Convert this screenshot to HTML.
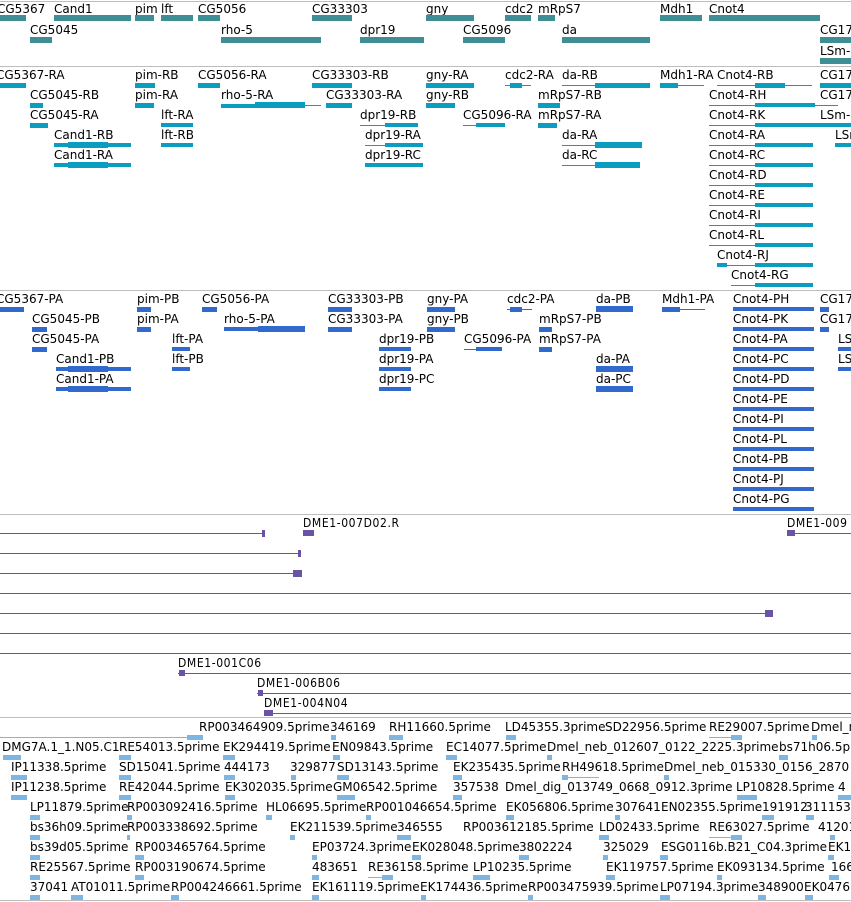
<!DOCTYPE html>
<html><head><meta charset="utf-8"><style>
body{margin:0;width:851px;height:902px;overflow:hidden;background:#fff;position:relative}
.l{position:absolute;font:12px/14px "DejaVu Sans",sans-serif;white-space:nowrap;color:#000}
.n{position:absolute;font:12px/14px "DejaVu Sans Condensed","DejaVu Sans",sans-serif;letter-spacing:0.6px;white-space:nowrap;color:#000}
.b{position:absolute}
.s{position:absolute;left:0;width:851px;height:1px;background:#bdbdbd}
.g1{background:#3f8e95;height:6px}
.g2{background:#0a9dbf;height:5px}
.g3{background:#3169cc;height:5px}
.ln2{background:#0a9dbf;height:1px}
.ln3{background:#3169cc;height:1px}
.p{background:#6a52a6}
.e{background:#7db6e2;height:5px}
</style></head><body>
<div class="s" style="top:1px"></div>
<div class="s" style="top:66px"></div>
<div class="s" style="top:290px"></div>
<div class="s" style="top:514px"></div>
<div class="s" style="top:717px"></div>
<div class="s" style="top:900px"></div>

<!-- Track 1 genes -->
<div class="l" style="left:-3px;top:2px">CG5367</div><div class="b g1" style="left:0;top:15px;width:26px"></div>
<div class="l" style="left:54px;top:2px">Cand1</div><div class="b g1" style="left:54px;top:15px;width:77px"></div>
<div class="l" style="left:135px;top:2px">pim</div><div class="b g1" style="left:135px;top:15px;width:19px"></div>
<div class="l" style="left:161px;top:2px">lft</div><div class="b g1" style="left:161px;top:15px;width:32px"></div>
<div class="l" style="left:198px;top:2px">CG5056</div><div class="b g1" style="left:198px;top:15px;width:22px"></div>
<div class="l" style="left:312px;top:2px">CG33303</div><div class="b g1" style="left:312px;top:15px;width:40px"></div>
<div class="l" style="left:426px;top:2px">gny</div><div class="b g1" style="left:426px;top:15px;width:48px"></div>
<div class="l" style="left:505px;top:2px">cdc2</div><div class="b g1" style="left:505px;top:15px;width:26px"></div>
<div class="l" style="left:538px;top:2px">mRpS7</div><div class="b g1" style="left:538px;top:15px;width:17px"></div>
<div class="l" style="left:660px;top:2px">Mdh1</div><div class="b g1" style="left:660px;top:15px;width:42px"></div>
<div class="l" style="left:709px;top:2px">Cnot4</div><div class="b g1" style="left:709px;top:15px;width:111px"></div>
<div class="l" style="left:30px;top:23px">CG5045</div><div class="b g1" style="left:30px;top:37px;width:22px"></div>
<div class="l" style="left:221px;top:23px">rho-5</div><div class="b g1" style="left:221px;top:37px;width:100px"></div>
<div class="l" style="left:360px;top:23px">dpr19</div><div class="b g1" style="left:360px;top:37px;width:64px"></div>
<div class="l" style="left:463px;top:23px">CG5096</div><div class="b g1" style="left:463px;top:37px;width:42px"></div>
<div class="l" style="left:562px;top:23px">da</div><div class="b g1" style="left:562px;top:37px;width:88px"></div>
<div class="l" style="left:820px;top:23px">CG17</div><div class="b g1" style="left:820px;top:37px;width:31px"></div>
<div class="l" style="left:820px;top:44px">LSm-</div><div class="b g1" style="left:820px;top:58px;width:31px"></div>

<!-- Track 2 transcripts -->
<div class="l" style="left:-4px;top:68px">CG5367-RA</div><div class="b g2" style="left:0;top:83px;width:26px"></div>
<div class="l" style="left:135px;top:68px">pim-RB</div><div class="b g2" style="left:135px;top:83px;width:20px"></div>
<div class="l" style="left:198px;top:68px">CG5056-RA</div><div class="b g2" style="left:198px;top:83px;width:22px"></div>
<div class="l" style="left:312px;top:68px">CG33303-RB</div><div class="b g2" style="left:312px;top:83px;width:40px"></div>
<div class="l" style="left:426px;top:68px">gny-RA</div><div class="b g2" style="left:426px;top:83px;width:48px"></div>
<div class="l" style="left:505px;top:68px">cdc2-RA</div><div class="b ln2" style="left:505px;top:85px;width:26px"></div><div class="b g2" style="left:510px;top:83px;width:12px"></div>
<div class="l" style="left:562px;top:68px">da-RB</div><div class="b ln2" style="left:562px;top:85px;width:33px"></div><div class="b g2" style="left:595px;top:83px;width:55px"></div>
<div class="l" style="left:660px;top:68px">Mdh1-RA</div><div class="b g2" style="left:660px;top:83px;width:18px"></div><div class="b ln2" style="left:678px;top:85px;width:26px"></div>
<div class="l" style="left:717px;top:68px">Cnot4-RB</div><div class="b ln2" style="left:717px;top:85px;width:95px"></div><div class="b g2" style="left:755px;top:83px;width:30px"></div>
<div class="l" style="left:820px;top:68px">CG17</div><div class="b g2" style="left:820px;top:83px;width:31px"></div>

<div class="l" style="left:30px;top:88px">CG5045-RB</div><div class="b g2" style="left:30px;top:103px;width:13px"></div>
<div class="l" style="left:135px;top:88px">pim-RA</div><div class="b g2" style="left:135px;top:103px;width:19px"></div>
<div class="l" style="left:221px;top:88px">rho-5-RA</div><div class="b g2" style="left:221px;width:84px;height:4px;top:104px"></div><div class="b g2" style="left:255px;top:102px;width:50px;height:6px"></div><div class="b ln2" style="left:305px;top:105px;width:16px"></div>
<div class="l" style="left:326px;top:88px">CG33303-RA</div><div class="b g2" style="left:326px;top:103px;width:26px"></div>
<div class="l" style="left:426px;top:88px">gny-RB</div><div class="b g2" style="left:426px;top:103px;width:29px"></div>
<div class="l" style="left:538px;top:88px">mRpS7-RB</div><div class="b g2" style="left:538px;top:103px;width:22px"></div>
<div class="l" style="left:709px;top:88px">Cnot4-RH</div><div class="b ln2" style="left:709px;top:105px;width:129px"></div><div class="b g2" style="left:755px;top:103px;width:60px;height:4px"></div>
<div class="l" style="left:820px;top:88px">CG17</div>

<div class="l" style="left:30px;top:108px">CG5045-RA</div><div class="b g2" style="left:30px;top:123px;width:18px"></div>
<div class="l" style="left:161px;top:108px">lft-RA</div><div class="b g2" style="left:161px;top:123px;width:32px;height:4px"></div>
<div class="l" style="left:360px;top:108px">dpr19-RB</div><div class="b ln2" style="left:360px;top:125px;width:58px"></div><div class="b g2" style="left:385px;top:123px;width:33px;height:4px"></div>
<div class="l" style="left:463px;top:108px">CG5096-RA</div><div class="b ln2" style="left:463px;top:125px;width:42px"></div><div class="b g2" style="left:476px;top:123px;width:29px;height:4px"></div>
<div class="l" style="left:538px;top:108px">mRpS7-RA</div><div class="b g2" style="left:538px;top:123px;width:19px"></div>
<div class="l" style="left:709px;top:108px">Cnot4-RK</div><div class="b ln2" style="left:709px;top:125px;width:142px"></div><div class="b g2" style="left:755px;top:123px;width:96px;height:4px"></div>
<div class="l" style="left:820px;top:108px">LSm-</div>

<div class="l" style="left:54px;top:128px">Cand1-RB</div><div class="b g2" style="left:54px;top:143px;width:77px;height:4px"></div><div class="b g2" style="left:68px;top:142px;width:40px;height:6px"></div>
<div class="l" style="left:161px;top:128px">lft-RB</div><div class="b g2" style="left:161px;top:143px;width:32px;height:4px"></div>
<div class="l" style="left:365px;top:128px">dpr19-RA</div><div class="b ln2" style="left:365px;top:145px;width:58px"></div><div class="b g2" style="left:385px;top:143px;width:38px;height:4px"></div>
<div class="l" style="left:562px;top:128px">da-RA</div><div class="b ln2" style="left:562px;top:145px;width:33px"></div><div class="b g2" style="left:595px;top:142px;width:47px;height:6px"></div>
<div class="l" style="left:709px;top:128px">Cnot4-RA</div><div class="b ln2" style="left:709px;top:145px;width:104px"></div><div class="b g2" style="left:755px;top:143px;width:58px;height:4px"></div>
<div class="l" style="left:835px;top:128px">LSr</div><div class="b g2" style="left:835px;top:143px;width:16px;height:4px"></div>

<div class="l" style="left:54px;top:148px">Cand1-RA</div><div class="b g2" style="left:54px;top:163px;width:77px;height:4px"></div><div class="b g2" style="left:68px;top:162px;width:40px;height:6px"></div>
<div class="l" style="left:365px;top:148px">dpr19-RC</div><div class="b g2" style="left:365px;top:163px;width:58px;height:4px"></div>
<div class="l" style="left:562px;top:148px">da-RC</div><div class="b ln2" style="left:562px;top:165px;width:33px"></div><div class="b g2" style="left:595px;top:162px;width:45px;height:6px"></div>
<div class="l" style="left:709px;top:148px">Cnot4-RC</div><div class="b ln2" style="left:709px;top:165px;width:104px"></div><div class="b g2" style="left:755px;top:163px;width:58px;height:4px"></div>

<div class="l" style="left:709px;top:168px">Cnot4-RD</div><div class="b ln2" style="left:709px;top:185px;width:104px"></div><div class="b g2" style="left:755px;top:183px;width:58px;height:4px"></div>
<div class="l" style="left:709px;top:188px">Cnot4-RE</div><div class="b ln2" style="left:709px;top:205px;width:104px"></div><div class="b g2" style="left:755px;top:203px;width:58px;height:4px"></div>
<div class="l" style="left:709px;top:208px">Cnot4-RI</div><div class="b ln2" style="left:709px;top:225px;width:104px"></div><div class="b g2" style="left:755px;top:223px;width:58px;height:4px"></div>
<div class="l" style="left:709px;top:228px">Cnot4-RL</div><div class="b ln2" style="left:709px;top:245px;width:104px"></div><div class="b g2" style="left:755px;top:243px;width:58px;height:4px"></div>
<div class="l" style="left:717px;top:248px">Cnot4-RJ</div><div class="b ln2" style="left:717px;top:265px;width:96px"></div><div class="b g2" style="left:717px;top:263px;width:10px;height:4px"></div><div class="b g2" style="left:755px;top:263px;width:58px;height:4px"></div>
<div class="l" style="left:731px;top:268px">Cnot4-RG</div><div class="b ln2" style="left:731px;top:285px;width:82px"></div><div class="b g2" style="left:755px;top:283px;width:58px;height:4px"></div>

<!-- Track 3 proteins -->
<div class="l" style="left:-4px;top:292px">CG5367-PA</div><div class="b g3" style="left:0;top:307px;width:24px"></div>
<div class="l" style="left:137px;top:292px">pim-PB</div><div class="b g3" style="left:137px;top:307px;width:14px"></div>
<div class="l" style="left:202px;top:292px">CG5056-PA</div><div class="b g3" style="left:202px;top:307px;width:15px"></div>
<div class="l" style="left:328px;top:292px">CG33303-PB</div><div class="b g3" style="left:328px;top:307px;width:24px"></div>
<div class="l" style="left:427px;top:292px">gny-PA</div><div class="b g3" style="left:427px;top:307px;width:28px"></div>
<div class="l" style="left:507px;top:292px">cdc2-PA</div><div class="b ln3" style="left:507px;top:309px;width:25px"></div><div class="b g3" style="left:510px;top:307px;width:12px"></div>
<div class="l" style="left:596px;top:292px">da-PB</div><div class="b g3" style="left:596px;top:306px;width:37px;height:6px"></div>
<div class="l" style="left:662px;top:292px">Mdh1-PA</div><div class="b g3" style="left:662px;top:307px;width:18px"></div><div class="b ln3" style="left:680px;top:309px;width:25px"></div>
<div class="l" style="left:733px;top:292px">Cnot4-PH</div><div class="b g3" style="left:733px;top:307px;width:81px;height:4px"></div>
<div class="l" style="left:820px;top:292px">CG17</div><div class="b g3" style="left:820px;top:307px;width:9px"></div>

<div class="l" style="left:32px;top:312px">CG5045-PB</div><div class="b g3" style="left:32px;top:327px;width:15px"></div>
<div class="l" style="left:137px;top:312px">pim-PA</div><div class="b g3" style="left:137px;top:327px;width:14px"></div>
<div class="l" style="left:224px;top:312px">rho-5-PA</div><div class="b g3" style="left:224px;top:327px;width:81px;height:4px"></div><div class="b g3" style="left:258px;top:326px;width:47px;height:6px"></div>
<div class="l" style="left:328px;top:312px">CG33303-PA</div><div class="b g3" style="left:328px;top:327px;width:24px"></div>
<div class="l" style="left:427px;top:312px">gny-PB</div><div class="b g3" style="left:427px;top:327px;width:28px"></div>
<div class="l" style="left:539px;top:312px">mRpS7-PB</div><div class="b g3" style="left:539px;top:327px;width:13px"></div>
<div class="l" style="left:733px;top:312px">Cnot4-PK</div><div class="b g3" style="left:733px;top:327px;width:81px;height:4px"></div>
<div class="l" style="left:820px;top:312px">CG17</div><div class="b g3" style="left:820px;top:327px;width:9px"></div>

<div class="l" style="left:32px;top:332px">CG5045-PA</div><div class="b g3" style="left:32px;top:347px;width:15px"></div>
<div class="l" style="left:172px;top:332px">lft-PA</div><div class="b g3" style="left:172px;top:347px;width:18px;height:4px"></div>
<div class="l" style="left:379px;top:332px">dpr19-PB</div><div class="b g3" style="left:379px;top:347px;width:32px;height:4px"></div>
<div class="l" style="left:464px;top:332px">CG5096-PA</div><div class="b ln3" style="left:464px;top:349px;width:38px"></div><div class="b g3" style="left:476px;top:347px;width:26px;height:4px"></div>
<div class="l" style="left:539px;top:332px">mRpS7-PA</div><div class="b g3" style="left:539px;top:347px;width:13px"></div>
<div class="l" style="left:733px;top:332px">Cnot4-PA</div><div class="b g3" style="left:733px;top:347px;width:81px;height:4px"></div>
<div class="l" style="left:838px;top:332px">LS</div><div class="b g3" style="left:838px;top:347px;width:13px;height:4px"></div>

<div class="l" style="left:56px;top:352px">Cand1-PB</div><div class="b g3" style="left:56px;top:367px;width:75px;height:4px"></div><div class="b g3" style="left:68px;top:366px;width:40px;height:6px"></div>
<div class="l" style="left:172px;top:352px">lft-PB</div><div class="b g3" style="left:172px;top:367px;width:18px;height:4px"></div>
<div class="l" style="left:379px;top:352px">dpr19-PA</div><div class="b g3" style="left:379px;top:367px;width:32px;height:4px"></div>
<div class="l" style="left:596px;top:352px">da-PA</div><div class="b g3" style="left:596px;top:366px;width:37px;height:6px"></div>
<div class="l" style="left:733px;top:352px">Cnot4-PC</div><div class="b g3" style="left:733px;top:367px;width:81px;height:4px"></div>
<div class="l" style="left:838px;top:352px">LS</div><div class="b g3" style="left:838px;top:367px;width:13px;height:4px"></div>

<div class="l" style="left:56px;top:372px">Cand1-PA</div><div class="b g3" style="left:56px;top:387px;width:75px;height:4px"></div><div class="b g3" style="left:68px;top:386px;width:40px;height:6px"></div>
<div class="l" style="left:379px;top:372px">dpr19-PC</div><div class="b g3" style="left:379px;top:387px;width:32px;height:4px"></div>
<div class="l" style="left:596px;top:372px">da-PC</div><div class="b g3" style="left:596px;top:386px;width:37px;height:6px"></div>
<div class="l" style="left:733px;top:372px">Cnot4-PD</div><div class="b g3" style="left:733px;top:387px;width:81px;height:4px"></div>
<div class="l" style="left:733px;top:392px">Cnot4-PE</div><div class="b g3" style="left:733px;top:407px;width:81px;height:4px"></div>
<div class="l" style="left:733px;top:412px">Cnot4-PI</div><div class="b g3" style="left:733px;top:427px;width:81px;height:4px"></div>
<div class="l" style="left:733px;top:432px">Cnot4-PL</div><div class="b g3" style="left:733px;top:447px;width:81px;height:4px"></div>
<div class="l" style="left:733px;top:452px">Cnot4-PB</div><div class="b g3" style="left:733px;top:467px;width:81px;height:4px"></div>
<div class="l" style="left:733px;top:472px">Cnot4-PJ</div><div class="b g3" style="left:733px;top:487px;width:81px;height:4px"></div>
<div class="l" style="left:733px;top:492px">Cnot4-PG</div><div class="b g3" style="left:733px;top:507px;width:81px;height:4px"></div>

<!-- DME track -->
<div class="n" style="left:303px;top:516px">DME1-007D02.R</div>
<div class="n" style="left:787px;top:516px">DME1-009</div>
<div class="b p" style="left:0;top:533px;width:265px;height:1px"></div><div class="b p" style="left:262px;top:530px;width:3px;height:7px"></div>
<div class="b p" style="left:303px;top:530px;width:11px;height:6px"></div>
<div class="b p" style="left:787px;top:530px;width:8px;height:6px"></div><div class="b p" style="left:787px;top:533px;width:64px;height:1px"></div>
<div class="b p" style="left:0;top:553px;width:300px;height:1px"></div><div class="b p" style="left:298px;top:550px;width:3px;height:7px"></div>
<div class="b p" style="left:0;top:573px;width:302px;height:1px"></div><div class="b p" style="left:293px;top:570px;width:9px;height:7px"></div>
<div class="b p" style="left:0;top:593px;width:851px;height:1px"></div>
<div class="b p" style="left:0;top:613px;width:772px;height:1px"></div><div class="b p" style="left:765px;top:610px;width:8px;height:7px"></div>
<div class="b p" style="left:0;top:633px;width:851px;height:1px"></div>
<div class="b p" style="left:0;top:653px;width:851px;height:1px"></div>
<div class="n" style="left:178px;top:656px">DME1-001C06</div>
<div class="b p" style="left:178px;top:673px;width:673px;height:1px"></div><div class="b p" style="left:179px;top:670px;width:6px;height:6px"></div>
<div class="n" style="left:257px;top:676px">DME1-006B06</div>
<div class="b p" style="left:257px;top:693px;width:594px;height:1px"></div><div class="b p" style="left:258px;top:690px;width:5px;height:6px"></div>
<div class="n" style="left:264px;top:696px">DME1-004N04</div>
<div class="b p" style="left:264px;top:713px;width:587px;height:1px"></div><div class="b p" style="left:264px;top:710px;width:9px;height:6px"></div>

<!-- EST track -->
<div class="b" style="left:0;top:737px;width:192px;height:1px;background:#7db6e2"></div><div class="b e" style="left:187px;top:735px;width:16px"></div>
<div class="l" style="left:199px;top:720px">RP003464909.5prime</div>
<div class="l" style="left:330px;top:720px">346169</div><div class="b e" style="left:331px;top:735px;width:5px"></div>
<div class="l" style="left:389px;top:720px">RH11660.5prime</div><div class="b e" style="left:389px;top:735px;width:14px"></div>
<div class="l" style="left:505px;top:720px">LD45355.3prime</div><div class="b e" style="left:506px;top:735px;width:10px"></div>
<div class="l" style="left:605px;top:720px">SD22956.5prime</div>
<div class="l" style="left:709px;top:720px">RE29007.5prime</div><div class="b" style="left:709px;top:737px;width:22px;height:1px;background:#7db6e2"></div><div class="b e" style="left:731px;top:735px;width:11px"></div>
<div class="l" style="left:811px;top:720px">Dmel_n</div>

<div class="l" style="left:2px;top:740px">DMG7A.1_1.N05.C1</div><div class="b e" style="left:3px;top:755px;width:18px"></div>
<div class="l" style="left:119px;top:740px">RE54013.5prime</div><div class="b e" style="left:119px;top:755px;width:12px"></div>
<div class="l" style="left:223px;top:740px">EK294419.5prime</div><div class="b e" style="left:223px;top:755px;width:12px"></div>
<div class="l" style="left:332px;top:740px">EN09843.5prime</div><div class="b e" style="left:333px;top:755px;width:7px"></div>
<div class="l" style="left:446px;top:740px">EC14077.5prime</div><div class="b e" style="left:446px;top:755px;width:11px"></div>
<div class="l" style="left:547px;top:740px">Dmel_neb_012607_0122_2225.3prime</div><div class="b e" style="left:547px;top:755px;width:5px"></div>
<div class="l" style="left:779px;top:740px">bs71h06.5p</div><div class="b e" style="left:779px;top:755px;width:9px"></div>
<div class="b e" style="left:812px;top:735px;width:5px"></div>

<div class="l" style="left:11px;top:760px">IP11338.5prime</div><div class="b e" style="left:11px;top:775px;width:16px"></div>
<div class="l" style="left:119px;top:760px">SD15041.5prime</div><div class="b e" style="left:119px;top:775px;width:12px"></div>
<div class="l" style="left:224px;top:760px">444173</div><div class="b e" style="left:224px;top:775px;width:11px"></div>
<div class="l" style="left:290px;top:760px">329877</div><div class="b e" style="left:291px;top:775px;width:5px"></div>
<div class="l" style="left:337px;top:760px">SD13143.5prime</div><div class="b e" style="left:337px;top:775px;width:12px"></div>
<div class="l" style="left:453px;top:760px">EK235435.5prime</div><div class="b e" style="left:453px;top:775px;width:9px"></div>
<div class="l" style="left:562px;top:760px">RH49618.5prime</div><div class="b" style="left:562px;top:777px;width:37px;height:1px;background:#7db6e2"></div><div class="b e" style="left:562px;top:775px;width:6px"></div>
<div class="l" style="left:664px;top:760px">Dmel_neb_015330_0156_2870</div><div class="b e" style="left:664px;top:775px;width:5px"></div>

<div class="l" style="left:11px;top:780px">IP11238.5prime</div><div class="b e" style="left:11px;top:795px;width:16px"></div>
<div class="l" style="left:119px;top:780px">RE42044.5prime</div><div class="b e" style="left:119px;top:795px;width:12px"></div>
<div class="l" style="left:225px;top:780px">EK302035.5prime</div><div class="b e" style="left:225px;top:795px;width:10px"></div>
<div class="l" style="left:333px;top:780px">GM06542.5prime</div><div class="b e" style="left:337px;top:795px;width:18px"></div>
<div class="l" style="left:453px;top:780px">357538</div><div class="b e" style="left:453px;top:795px;width:9px"></div>
<div class="l" style="left:505px;top:780px">Dmel_dig_013749_0668_0912.3prime</div>
<div class="l" style="left:736px;top:780px">LP10828.5prime</div><div class="b e" style="left:737px;top:795px;width:20px"></div>
<div class="l" style="left:838px;top:780px">4</div><div class="b e" style="left:838px;top:795px;width:13px"></div>

<div class="l" style="left:30px;top:800px">LP11879.5prime</div><div class="b e" style="left:30px;top:815px;width:10px"></div>
<div class="l" style="left:127px;top:800px">RP003092416.5prime</div><div class="b e" style="left:127px;top:815px;width:5px"></div>
<div class="l" style="left:266px;top:800px">HL06695.5prime</div><div class="b e" style="left:266px;top:815px;width:6px"></div>
<div class="l" style="left:366px;top:800px">RP001046654.5prime</div><div class="b e" style="left:366px;top:815px;width:5px"></div>
<div class="l" style="left:506px;top:800px">EK056806.5prime</div><div class="b e" style="left:506px;top:815px;width:8px"></div>
<div class="l" style="left:615px;top:800px">307641</div><div class="b e" style="left:615px;top:815px;width:5px"></div>
<div class="l" style="left:661px;top:800px">EN02355.5prime</div><div class="b e" style="left:762px;top:815px;width:12px"></div>
<div class="l" style="left:762px;top:800px">191912</div>
<div class="l" style="left:805px;top:800px">311153</div><div class="b e" style="left:806px;top:815px;width:8px"></div>

<div class="l" style="left:30px;top:820px">bs36h09.5prime</div><div class="b e" style="left:30px;top:835px;width:10px"></div>
<div class="l" style="left:127px;top:820px">RP003338692.5prime</div><div class="b e" style="left:127px;top:835px;width:3px"></div>
<div class="l" style="left:290px;top:820px">EK211539.5prime</div><div class="b e" style="left:290px;top:835px;width:5px"></div>
<div class="l" style="left:397px;top:820px">346555</div><div class="b e" style="left:397px;top:835px;width:14px"></div>
<div class="l" style="left:463px;top:820px">RP003612185.5prime</div>
<div class="l" style="left:599px;top:820px">LD02433.5prime</div><div class="b e" style="left:599px;top:835px;width:10px"></div>
<div class="l" style="left:709px;top:820px">RE63027.5prime</div><div class="b" style="left:709px;top:837px;width:22px;height:1px;background:#7db6e2"></div><div class="b e" style="left:731px;top:835px;width:11px"></div>
<div class="l" style="left:818px;top:820px">41201</div><div class="b e" style="left:830px;top:835px;width:5px"></div>

<div class="l" style="left:30px;top:840px">bs39d05.5prime</div><div class="b e" style="left:30px;top:855px;width:10px"></div>
<div class="l" style="left:135px;top:840px">RP003465764.5prime</div><div class="b e" style="left:135px;top:855px;width:9px"></div>
<div class="l" style="left:312px;top:840px">EP03724.3prime</div><div class="b e" style="left:312px;top:855px;width:5px"></div>
<div class="l" style="left:412px;top:840px">EK028048.5prime</div><div class="b e" style="left:412px;top:855px;width:9px"></div>
<div class="l" style="left:519px;top:840px">3802224</div><div class="b e" style="left:519px;top:855px;width:10px"></div>
<div class="l" style="left:603px;top:840px">325029</div><div class="b e" style="left:603px;top:855px;width:5px"></div>
<div class="l" style="left:661px;top:840px">ESG0116b.B21_C04.3prime</div><div class="b e" style="left:660px;top:855px;width:8px"></div>
<div class="l" style="left:828px;top:840px">EK1</div><div class="b e" style="left:828px;top:855px;width:6px"></div>

<div class="l" style="left:30px;top:860px">RE25567.5prime</div><div class="b e" style="left:30px;top:875px;width:10px"></div>
<div class="l" style="left:135px;top:860px">RP003190674.5prime</div><div class="b e" style="left:135px;top:875px;width:9px"></div>
<div class="l" style="left:312px;top:860px">483651</div><div class="b e" style="left:312px;top:875px;width:7px"></div>
<div class="l" style="left:368px;top:860px">RE36158.5prime</div><div class="b" style="left:368px;top:877px;width:22px;height:1px;background:#7db6e2"></div><div class="b e" style="left:382px;top:875px;width:11px"></div>
<div class="l" style="left:473px;top:860px">LP10235.5prime</div><div class="b e" style="left:473px;top:875px;width:17px"></div>
<div class="l" style="left:606px;top:860px">EK119757.5prime</div><div class="b e" style="left:606px;top:875px;width:9px"></div>
<div class="l" style="left:717px;top:860px">EK093134.5prime</div><div class="b e" style="left:717px;top:875px;width:5px"></div>
<div class="l" style="left:831px;top:860px">166</div><div class="b e" style="left:829px;top:875px;width:10px"></div>

<div class="l" style="left:30px;top:880px">37041</div><div class="b e" style="left:30px;top:895px;width:10px"></div>
<div class="l" style="left:71px;top:880px">AT01011.5prime</div><div class="b e" style="left:71px;top:895px;width:12px"></div>
<div class="l" style="left:171px;top:880px">RP004246661.5prime</div><div class="b e" style="left:171px;top:895px;width:8px"></div>
<div class="l" style="left:312px;top:880px">EK161119.5prime</div><div class="b e" style="left:312px;top:895px;width:7px"></div>
<div class="l" style="left:420px;top:880px">EK174436.5prime</div><div class="b e" style="left:421px;top:895px;width:5px"></div>
<div class="l" style="left:528px;top:880px">RP003475939.5prime</div><div class="b e" style="left:528px;top:895px;width:5px"></div>
<div class="l" style="left:660px;top:880px">LP07194.3prime</div><div class="b e" style="left:660px;top:895px;width:10px"></div>
<div class="l" style="left:758px;top:880px">348900</div><div class="b e" style="left:758px;top:895px;width:8px"></div>
<div class="l" style="left:804px;top:880px">EK0476</div><div class="b e" style="left:805px;top:895px;width:8px"></div>
</body></html>
